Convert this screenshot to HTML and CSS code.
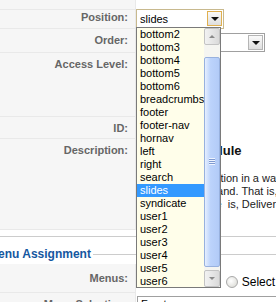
FILE: index.html
```html
<!DOCTYPE html>
<html lang="en">
<head>
    <meta charset="UTF-8">
    <title>Module: Edit</title>
    <meta name="viewport" content="width=device-width, initial-scale=1.0">
    <link rel="stylesheet" href="styles.css">
</head>
<body>
    <div class="page">
        <div class="details">
            <table class="admintable">
                <tr class="r-top"><td class="key"></td><td></td></tr>
                <tr class="r-pos">
                    <td class="key key-pos">Position:</td>
                    <td><div class="combo">slides<span class="drop"></span></div></td>
                </tr>
                <tr class="r-order">
                    <td class="key">Order:</td>
                    <td><div class="select order">1::Slides<span class="drop"></span></div></td>
                </tr>
                <tr class="r-access"><td class="key">Access Level:</td><td></td></tr>
                <tr class="r-id"><td class="key">ID:</td><td></td></tr>
                <tr class="r-desc">
                    <td class="key">Description:</td>
                    <td class="desc">
                        <div class="desc-title">Custom Module</div>
                        <p>All the presentation in a way that fits<br>Pictures rotate&thinsp;and. That is, the<br>Just as that, the&nbsp; is, Deliver the</p>
                    </td>
                </tr>
            </table>
        </div>

        <fieldset class="menus">
            <legend>Menu Assignment</legend>
            <table class="admintable">
                <tr class="r-menus">
                    <td class="key">Menus:</td>
                    <td class="radios">
                        <label><span class="radio"></span>All</label>
                        <label><span class="radio"></span>None</label>
                        <label><span class="radio"></span>Select Menu Item(s) from the List</label>
                    </td>
                </tr>
                <tr class="r-sel">
                    <td class="key">Menu Selection:</td>
                    <td><div class="listbox">Frontpage</div></td>
                </tr>
            </table>
        </fieldset>

        <!-- opened position list -->
        <div class="popup">
            <ul class="options">
                <li>bottom2</li>
                <li>bottom3</li>
                <li>bottom4</li>
                <li>bottom5</li>
                <li>bottom6</li>
                <li>breadcrumbs</li>
                <li>footer</li>
                <li>footer-nav</li>
                <li>hornav</li>
                <li>left</li>
                <li>right</li>
                <li>search</li>
                <li class="selected">slides</li>
                <li>syndicate</li>
                <li>user1</li>
                <li>user2</li>
                <li>user3</li>
                <li>user4</li>
                <li>user5</li>
                <li>user6</li>
            </ul>
            <div class="scrollbar">
                <div class="sb-btn sb-up"></div>
                <div class="sb-track"><div class="sb-thumb"><span class="grip"></span></div></div>
                <div class="sb-btn sb-down"></div>
            </div>
        </div>
    </div>
</body>
</html>
```

FILE: styles.css
```css
body { margin: 0; background: #fff; font-family: "Liberation Sans", Arial, sans-serif; font-size: 11px; color: #333; }
.page { position: relative; width: 276px; height: 302px; overflow: hidden; }

.details { padding-bottom: 6px; border-bottom: 1px solid #ccc; }
.admintable { border-collapse: separate; border-spacing: 0; width: 520px; table-layout: fixed; }
.admintable td { box-sizing: border-box; padding: 0; vertical-align: top; }
.admintable td.key {
    width: 136px;
    padding: 5px 7px 0 0;
    background: #f6f6f6;
    border-bottom: 1px solid #e9e9e9;
    border-right: 1px solid #e9e9e9;
    text-align: right;
    font-weight: bold;
    color: #666;
    white-space: nowrap;
}
.r-top td { height: 10px; }
.r-pos td { height: 19px; }
.admintable td.key-pos { padding-top: 1px; }
.r-order td { height: 24px; }
.r-access td { height: 64px; }
.r-id td { height: 22px; }
.r-desc td { height: 91px; }

.combo, .select {
    position: relative;
    box-sizing: border-box;
    background: #fff;
    border: 1px solid #a5acb2;
    padding: 3px 0 0 3px;
    color: #000;
}
.combo { width: 88px; height: 20px; margin-top: -1px; border-color: #c8b98e; }
.order { width: 129px; height: 19px; margin-top: 4px; border-color: #a0a0a0; }
.drop {
    position: absolute;
    right: 1px; top: 1px;
    width: 15px; height: 15px;
    box-sizing: border-box;
    border: 1px solid #b5b5b5;
    background: linear-gradient(#fafafa, #dedede);
}
.drop::after {
    content: "";
    position: absolute;
    left: 3px; top: 5px;
    border-left: 4px solid transparent;
    border-right: 4px solid transparent;
    border-top: 4px solid #111;
}
.combo .drop { border-color: #e0b050; }

.admintable td.desc { padding: 4px 0 0 8px; color: #222; white-space: nowrap; }
.desc-title { font-size: 13px; font-weight: bold; color: #111; }
.desc p { margin: 14px 0 0; line-height: 13px; }

.menus { margin: 10px 0 0 -20px; padding: 0 0 0 19px; border: 1px solid #ccc; border-right: 0; }
.menus legend { margin-left: -14px; padding: 0 2px; font-size: 12px; font-weight: bold; color: #15579f; }
.menus .admintable { margin-top: 3px; }
.r-menus td { height: 29px; }
.r-menus td.key { padding-top: 8px; }
.admintable td.radios { padding: 11px 0 0 3px; white-space: nowrap; color: #000; font-size: 12px; }
.radios label { display: inline-flex; align-items: center; gap: 4px; margin-right: 3px; }
.radio {
    width: 10px; height: 10px;
    border: 1px solid #a9a9a9;
    border-radius: 50%;
    background: radial-gradient(circle at 40% 40%, #fff, #d6d6d0);
}
.r-sel td { height: 20px; }
.listbox { margin: 3px 0 0 1px; height: 40px; border: 1px solid #a0a0a0; padding: 1px 3px; color: #000; }

.popup {
    position: absolute;
    left: 136px; top: 27px;
    width: 85px; height: 261px;
    box-sizing: border-box;
    border: 1px solid #7a7a7a;
    background: #fffeea;
    display: flex;
}
.options { list-style: none; margin: 0; padding: 0; flex: 1; color: #000; }
.options li { height: 13px; line-height: 13px; padding-left: 3px; white-space: nowrap; }
.options li.selected { background: #3399ff; color: #fff; }

.scrollbar { width: 16px; display: flex; flex-direction: column; background: #f5f5f1; }
.sb-btn {
    position: relative;
    height: 17px;
    box-sizing: border-box;
    border: 1px solid #c3c3c3;
    border-radius: 2px;
    background: linear-gradient(90deg, #f2f2f2, #dadada);
}
.sb-btn::after {
    content: "";
    position: absolute;
    left: 4px; top: 6px;
    border-left: 3px solid transparent;
    border-right: 3px solid transparent;
}
.sb-up::after { border-bottom: 3px solid #8a8a8a; }
.sb-down::after { border-top: 3px solid #8a8a8a; }
.sb-track { flex: 1; padding: 12px 0 3px; box-sizing: border-box; display: flex; }
.sb-thumb {
    flex: 1;
    position: relative;
    border: 1px solid #98b1de;
    border-radius: 2px;
    background: linear-gradient(90deg, #e6efff, #bcd3fb 40%, #b2cbf7);
}
.grip {
    position: absolute;
    left: 4px; top: 50%;
    width: 6px; height: 7px;
    margin-top: -4px;
    background: repeating-linear-gradient(#eef4ff 0 1px, #7f9ad0 1px 2px);
}
```
